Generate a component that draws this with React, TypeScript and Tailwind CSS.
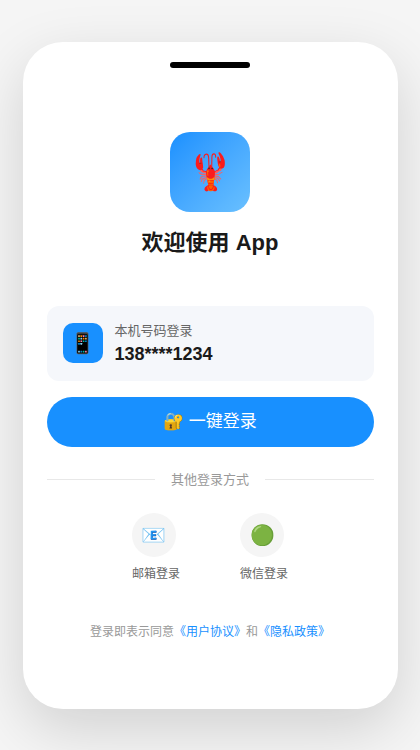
function OtherLogin({ icon, label }: { icon: string; label: string }) {
  return (
    <button type="button" className="flex cursor-pointer flex-col items-start gap-2">
      <span className="flex size-11 items-center justify-center rounded-full bg-[#f5f5f5] text-xl leading-6">
        {icon}
      </span>
      <span className="text-xs leading-[18px] text-[#666]">{label}</span>
    </button>
  );
}

export default function App() {
  return (
    <div className="flex min-h-screen items-center justify-center bg-[#f5f5f5] font-['Liberation_Sans','Noto_Sans_CJK_SC',sans-serif]">
      <main className="flex min-h-[667px] w-full max-w-[375px] flex-col items-center rounded-[40px] bg-white px-6 pt-5 pb-16 shadow-[0_20px_60px_rgba(0,0,0,0.15)]">
        <div className="h-1.5 w-20 rounded-[3px] bg-black" />
        <div className="mt-16 flex size-20 items-center justify-center rounded-[20px] bg-linear-135 from-[#1890ff] to-[#69c0ff] text-4xl">
          🦞
        </div>
        <h1 className="mt-4 text-[22px] leading-[30px] font-bold text-[#1a1a1a]">欢迎使用 App</h1>

        <section className="mt-12 flex w-full items-center gap-3 rounded-xl bg-[#f5f7fb] p-4">
          <div className="flex size-10 items-center justify-center rounded-[10px] bg-[#1890ff] text-xl leading-6">
            📱
          </div>
          <div>
            <p className="text-[13px] leading-[18px] text-[#666]">本机号码登录</p>
            <p className="mt-1 text-lg leading-[21px] font-bold text-[#1a1a1a]">138****1234</p>
          </div>
        </section>

        <button
          type="button"
          className="mt-4 h-[50px] w-full cursor-pointer rounded-full bg-[#1890ff] text-[17px] leading-6 text-white"
        >
          🔐 一键登录
        </button>

        <div className="mt-6 flex w-full items-center gap-4 text-[13px] leading-[18px] text-[#999]">
          <span className="h-px flex-1 bg-[#e8e8e8]" />
          <span>其他登录方式</span>
          <span className="h-px flex-1 bg-[#e8e8e8]" />
        </div>

        <div className="mt-6 flex justify-center gap-[60px]">
          <OtherLogin icon="📧" label="邮箱登录" />
          <OtherLogin icon="🟢" label="微信登录" />
        </div>

        <p className="mt-10 text-center text-xs leading-[18px] text-[#999]">
          登录即表示同意
          <a href="#terms" className="text-[#1890ff]">《用户协议》</a>
          和
          <a href="#privacy" className="text-[#1890ff]">《隐私政策》</a>
        </p>
      </main>
    </div>
  );
}
